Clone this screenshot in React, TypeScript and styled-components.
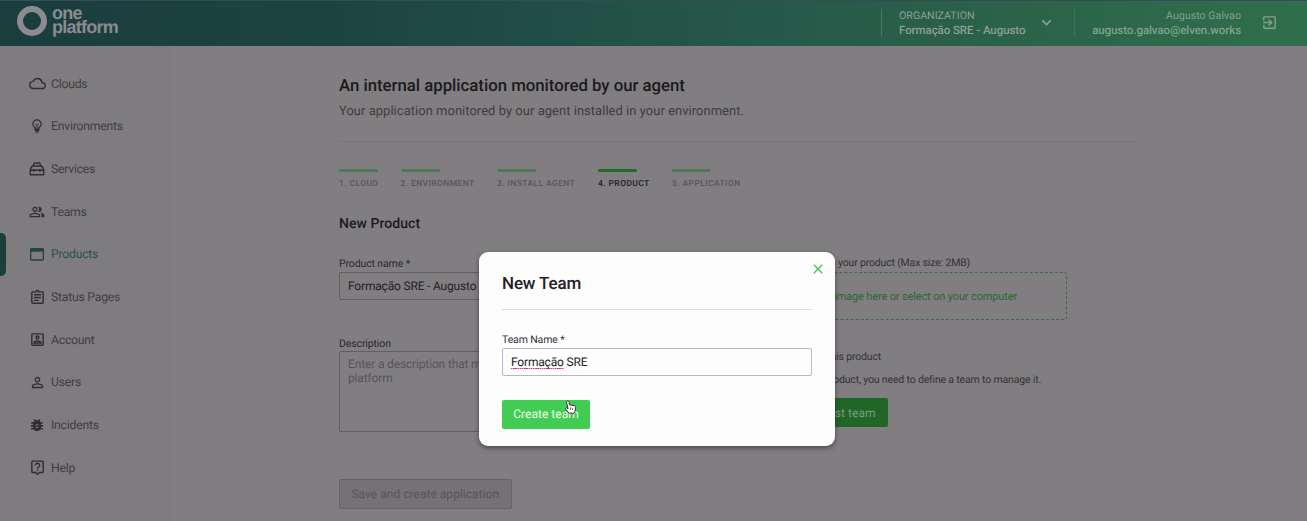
import React from "react";
import styled, { createGlobalStyle, css } from "styled-components";
import {
  MdOutlineCloud,
  MdOutlinePeopleAlt,
  MdOutlineAssignment,
  MdOutlinePortrait,
  MdPersonOutline,
  MdOutlineLiveHelp,
  MdExitToApp,
  MdKeyboardArrowDown,
  MdClose,
} from "react-icons/md";

const GlobalStyle = createGlobalStyle`
  * { box-sizing: border-box; }
  body {
    margin: 0;
    overflow: hidden;
    font-family: Roboto, "Liberation Sans", sans-serif;
    text-rendering: geometricPrecision;
    background: #817e81;
  }
  h1, h2, p { margin: 0; font-weight: 500; }
  button { font-family: inherit; text-rendering: inherit; }
`;

const Page = styled.div`
  height: 521px;
  display: flex;
  flex-direction: column;
  overflow: hidden;
`;

const Header = styled.header`
  height: 45.5px;
  flex: none;
  display: flex;
  align-items: flex-start;
  justify-content: space-between;
  background: linear-gradient(90deg, #1a3d3e 0%, #1c443f 25%, #26584a 58%, #2b6349 78%, #306f4b 100%);
  border-top: 1px solid #354c58;
  color: #8f9f95;
`;

const Logo = styled.div`
  display: flex;
  gap: 5px;
  padding: 5px 0 0 17px;
`;

const Ring = styled.span`
  width: 30px;
  height: 30px;
  border: 6.5px solid #8d8a90;
  border-radius: 50%;
`;

const Brand = styled.div`
  display: flex;
  flex-direction: column;
  font: 700 18px/14px "Liberation Sans", sans-serif;
  letter-spacing: -0.75px;
  color: #8d8a90;
`;

const HeaderRight = styled.div`
  display: flex;
  padding-top: 8px;
`;

const HeaderBlock = styled.div<{ $end?: boolean; $width: number }>`
  width: ${(p) => p.$width}px;
  border-left: 1px solid #4b7762;
  height: 27px;
  padding-left: 17px;
  display: flex;
  align-items: center;
  ${(p) => p.$end && css`text-align: right; color: #84a08e; border-color: #3f7458;`}
`;

const HeaderText = styled.div<{ $width: number }>`
  width: ${(p) => p.$width}px;
  margin: 0 12px 0 0;
  font-size: 10.6px;
  line-height: 14px;
  letter-spacing: 0.04px;
  white-space: nowrap;
`;

const HeaderIcon = styled.span<{ $shift: number }>`
  display: flex;
  margin-left: ${(p) => p.$shift}px;
`;

const Strong = styled.div`
  font-size: 11.5px;
  font-weight: 500;
  letter-spacing: -0.07px;
`;

const Body = styled.div`
  flex: 1;
  display: flex;
`;

const Sidebar = styled.nav`
  width: 171px;
  flex: none;
  padding-top: 17px;
  background: #7f7c7f;
`;

const NavItem = styled.a<{ $active?: boolean }>`
  display: flex;
  align-items: center;
  height: 42.65px;
  color: ${(p) => (p.$active ? "#285349" : "#403d42")};
  font-size: 12.2px;
  letter-spacing: -0.22px;

  &::before {
    content: "";
    width: 6px;
    height: 43px;
    border-radius: 0 5px 5px 0;
    background: ${(p) => (p.$active ? "#1d3f3b" : "transparent")};
  }
`;

const NavIcon = styled.span<{ $active?: boolean }>`
  width: 18px;
  height: 18px;
  margin: 0 5px 0 22px;
  display: grid;
  place-items: center;
  color: ${(p) => (p.$active ? "#24443e" : "#302d33")};
`;

const Main = styled.main`
  width: 797px;
  margin-left: 168px;
  padding-top: 30px;
`;

const Title = styled.h1`
  font-size: 16.8px;
  line-height: 20px;
  letter-spacing: -0.02px;
  color: #1c191e;
`;

const Subtitle = styled.p`
  margin-top: 6px;
  font-size: 12.9px;
  line-height: 19px;
  font-weight: 400;
  letter-spacing: 0.07px;
  color: #3e3b3f;
  padding-bottom: 20px;
  border-bottom: 1px solid #767477;
`;

const Steps = styled.div`
  display: flex;
  gap: 23px;
  margin-top: 27px;
`;

const Step = styled.div<{ $active?: boolean; $width: number }>`
  width: ${(p) => p.$width}px;
  white-space: nowrap;
  font-size: 8.5px;
  line-height: 10px;
  font-weight: 600;
  letter-spacing: 0.38px;
  color: ${(p) => (p.$active ? "#29262b" : "#5b585c")};

  &::before {
    content: "";
    display: block;
    width: 39px;
    height: 3.5px;
    margin-bottom: 7px;
    border-radius: 2px;
    background: ${(p) => (p.$active ? "#22692a" : "#517657")};
  }
`;

const SectionTitle = styled.h2`
  margin-top: 24.5px;
  font-size: 14px;
  line-height: 21px;
  letter-spacing: 0.05px;
  color: #1c191e;
`;

const Columns = styled.div`
  display: flex;
  justify-content: space-between;
  width: 728px;
`;

const Column = styled.div<{ $top: number }>`
  width: 341px;
  padding-top: ${(p) => p.$top}px;
`;

const Field = styled.div`
  margin-bottom: 36.5px;
`;

const Label = styled.label<{ $dark?: boolean }>`
  display: block;
  font-size: 10.5px;
  line-height: 14px;
  letter-spacing: -0.12px;
  white-space: nowrap;
  color: ${(p) => (p.$dark ? "#333138" : "#2b292d")};
`;

const Input = styled.div<{ $light?: boolean }>`
  height: 28px;
  margin-top: 1px;
  padding: 0 8px;
  display: flex;
  align-items: center;
  border: 1px solid ${(p) => (p.$light ? "#b9b8bc" : "#625f63")};
  border-radius: 2px;
  font-size: 12px;
  letter-spacing: -0.18px;
  white-space: pre;
  color: #242126;
`;

const TextArea = styled.div`
  height: 81px;
  margin-top: 0.5px;
  padding: 6px 8px;
  border: 1px solid #625f63;
  border-radius: 2px;
  font-size: 12px;
  line-height: 13.6px;
  letter-spacing: -0.15px;
  white-space: pre;
  color: #575458;
`;

const DropZone = styled.div`
  height: 48px;
  margin-top: 2px;
  display: flex;
  align-items: center;
  justify-content: flex-end;
  padding-right: 49px;
  border: 1px dashed #3c6c42;
  border-radius: 3px;
  font-size: 11px;
  letter-spacing: -0.14px;
  color: #2c6635;
`;

const Hint = styled.p<{ $width: number; $top: number }>`
  width: ${(p) => p.$width}px;
  margin-top: ${(p) => p.$top}px;
  display: flex;
  justify-content: flex-end;
  font-size: 10.5px;
  line-height: 14px;
  font-weight: 400;
  letter-spacing: -0.17px;
  white-space: nowrap;
  color: #343136;
`;

const Button = styled.button<{ $tone: "dim" | "bright" | "off"; $width: number; $top: number }>`
  display: block;
  width: ${(p) => p.$width}px;
  height: ${(p) => (p.$tone === "off" ? 30 : 28.5)}px;
  margin-top: ${(p) => p.$top}px;
  padding: 0;
  border-radius: 2px;
  border: ${(p) => (p.$tone === "off" ? "1px solid #666367" : "0")};
  font-size: 12px;
  letter-spacing: 0.03px;
  white-space: nowrap;
  ${(p) => p.$tone === "dim" && css`background: #206626; color: #7f9b80; text-align: right; padding-right: 12px;`}
  ${(p) => p.$tone === "bright" && css`background: #43cc53; color: #f1fff0;`}
  ${(p) => p.$tone === "off" && css`background: #757275; color: #585559;`}
`;

const Overlay = styled.div`
  position: absolute;
  inset: 0 0 auto 0;
  height: 521px;
  padding: 252px 0 0 479px;
`;

const Modal = styled.section`
  position: relative;
  width: 356px;
  height: 194px;
  padding: 21px 23px 0;
  border-radius: 9px;
  background: #fefdfe;
  box-shadow: 0 2px 5px rgba(30, 25, 32, 0.55);
`;

const ModalTitle = styled.h2`
  height: 37px;
  font-size: 17px;
  line-height: 22px;
  letter-spacing: -0.15px;
  color: #222026;
  border-bottom: 1px solid #dcdbdd;
  margin-bottom: 23px;
`;

const Close = styled.span`
  position: absolute;
  top: 9px;
  right: 9px;
  width: 16px;
  height: 16px;
  color: #43c653;
`;

const Misspelled = styled.span`
  background: repeating-linear-gradient(90deg, #df3465 0 1.4px, #f3a9bf 1.4px 2.2px) left bottom / 100% 1.3px no-repeat;
`;

const Pointer = styled.svg`
  position: absolute;
  left: 85px;
  top: 148px;
  width: 13px;
  height: 14px;
`;

type IconProps = { size: number };

const BulbIcon = ({ size }: IconProps) => (
  <svg width={size} height={size} viewBox="0 0 24 24" fill="none" stroke="currentColor" strokeWidth="2.2">
    <path d="M8.800 17.500v-2.700C6.200 13.500 4.800 11.500 4.800 8.700a7.200 7.200 0 0 1 14.400 0c0 2.800-1.400 4.800-4 6.100v2.700Z" />
    <path d="M9 8.500l3 2 3-2M12 10.500v6" strokeWidth="1.500" />
    <path d="M8 19h8M9.500 22.200h5" strokeWidth="2.800" />
  </svg>
);

const ToolboxIcon = ({ size }: IconProps) => (
  <svg width={size} height={size} viewBox="0 0 24 24" fill="none" stroke="currentColor" strokeWidth="2.200" strokeLinejoin="round">
    <path d="M2 20.500v-6c0-3.500 2-6.500 5-7h10c3 .5 5 3.500 5 7v6Z" />
    <path d="M6 7.500 8 3h8l2 4.500M2 14h20" />
    <path d="M7.500 12v4M16.500 12v4" />
  </svg>
);

const WindowIcon = ({ size }: IconProps) => (
  <svg width={size} height={size} viewBox="0 0 24 24" fill="none" stroke="currentColor" strokeWidth="2">
    <rect x="2.500" y="4" width="19" height="17" rx="1" />
    <path d="M2 6.500h20" strokeWidth="4" />
  </svg>
);

const BugIcon = ({ size }: IconProps) => (
  <svg width={size} height={size} viewBox="0 0 24 24">
    <path d="M2 8.500h20M1.500 13.500h21M2 18.500h20M7 2.500l3.500 3.500M17 2.500l-3.500 3.500" stroke="currentColor" strokeWidth="2.800" />
    <path d="M12 4c4 0 6.800 3 6.800 6v5.500c0 4-3 7-6.800 7s-6.800-3-6.800-7v-5.500c0-3 2.800-6 6.800-6Z" fill="currentColor" />
    <path d="M9.500 11.500h5M9.500 16h5" stroke="#7f7c7f" strokeWidth="1.800" />
  </svg>
);

const navigation = [
  { label: "Clouds", Icon: MdOutlineCloud, size: 17 },
  { label: "Environments", Icon: BulbIcon, size: 14 },
  { label: "Services", Icon: ToolboxIcon, size: 16 },
  { label: "Teams", Icon: MdOutlinePeopleAlt, size: 16 },
  { label: "Products", Icon: WindowIcon, size: 16, active: true },
  { label: "Status Pages", Icon: MdOutlineAssignment, size: 17 },
  { label: "Account", Icon: MdOutlinePortrait, size: 17 },
  { label: "Users", Icon: MdPersonOutline, size: 17 },
  { label: "Incidents", Icon: BugIcon, size: 14 },
  { label: "Help", Icon: MdOutlineLiveHelp, size: 17 },
];

const steps = [
  { label: "1. CLOUD", width: 38.5 },
  { label: "2. ENVIRONMENT", width: 73.5 },
  { label: "3. INSTALL AGENT", width: 78 },
  { label: "4. PRODUCT", width: 51, active: true },
  { label: "5. APPLICATION", width: 69 },
];

export default function App() {
  return (
    <>
      <GlobalStyle />
      <Page>
        <Header>
          <Logo>
            <Ring />
            <Brand>
              <span>one</span>
              <span>platform</span>
            </Brand>
          </Logo>
          <HeaderRight>
            <HeaderBlock $width={193}>
              <HeaderText $width={127}>
                ORGANIZATION
                <Strong>Formação SRE - Augusto</Strong>
              </HeaderText>
              <HeaderIcon $shift={-1}><MdKeyboardArrowDown size={19} /></HeaderIcon>
            </HeaderBlock>
            <HeaderBlock $end $width={233}>
              <HeaderText $width={149}>
                Augusto Galvao
                <Strong>augusto.galvao@elven.works</Strong>
              </HeaderText>
              <HeaderIcon $shift={8}><MdExitToApp size={17} /></HeaderIcon>
            </HeaderBlock>
          </HeaderRight>
        </Header>
        <Body>
          <Sidebar>
            {navigation.map(({ label, Icon, size, active }) => (
              <NavItem key={label} $active={active}>
                <NavIcon $active={active}><Icon size={size} /></NavIcon>
                {label}
              </NavItem>
            ))}
          </Sidebar>
          <Main>
            <Title>An internal application monitored by our agent</Title>
            <Subtitle>Your application monitored by our agent installed in your environment.</Subtitle>
            <Steps>
              {steps.map((s) => (
                <Step key={s.label} $width={s.width} $active={s.active}>{s.label}</Step>
              ))}
            </Steps>
            <SectionTitle>New Product</SectionTitle>
            <Columns>
              <Column $top={22.5}>
                <Field>
                  <Label>Product name *</Label>
                  <Input>Formação SRE - Augusto</Input>
                </Field>
                <Label>Description</Label>
                <TextArea>Enter a description that m<br />platform</TextArea>
                <Button $tone="off" $width={172.5} $top={47}>Save and create application</Button>
              </Column>
              <Column $top={0}>
                <Hint $width={244} $top={21.5}>your product (Max size: 2MB)</Hint>
                <DropZone>image here or select on your computer</DropZone>
                <Hint $width={155} $top={30}>his product</Hint>
                <Hint $width={315} $top={9}>oduct, you need to define a team to manage it.</Hint>
                <Button $tone="dim" $width={161.5} $top={11.4}>rst team</Button>
              </Column>
            </Columns>
          </Main>
        </Body>
      </Page>
      <Overlay>
        <Modal>
          <Close><MdClose size={16} /></Close>
          <ModalTitle>New Team</ModalTitle>
          <Label $dark>Team Name *</Label>
          <Input $light><Misspelled>Formação</Misspelled> SRE</Input>
          <Button $tone="bright" $width={88} $top={24.2}>Create team</Button>
          <Pointer viewBox="0 0 13 14">
            <path d="M3.2 1.2c1-.6 1.8.1 1.9 1l.3 2.6 5 .9c1 .3 1.4 1 1.2 2l-.7 3.7-.8 1.8H5.3L1.6 9.1c-.4-.9.5-1.6 1.4-1.1l1 .7L2.6 2.4c-.1-.5.1-1 .6-1.2Z" fill="#fff" stroke="#303530" strokeWidth="1" />
            <path d="M6.500 7.500v2.500M8.500 7.800v2.200" fill="none" stroke="#303530" strokeWidth=".7" />
          </Pointer>
        </Modal>
      </Overlay>
    </>
  );
}
